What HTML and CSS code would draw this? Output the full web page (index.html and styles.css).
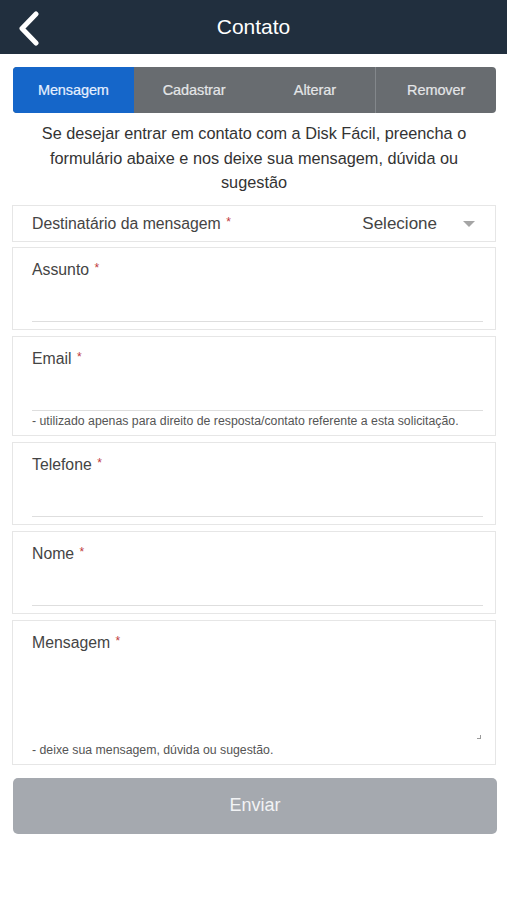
FILE: index.html
```html
<!DOCTYPE html>
<html lang="pt-BR">

<head>
    <meta charset="UTF-8">
    <meta name="viewport" content="width=device-width, initial-scale=1.0">
    <title>Contato</title>
    <link rel="stylesheet" href="styles.css">
</head>

<body>
    <header class="topbar">
        <a class="back" href="#">
            <svg width="22" height="36" viewBox="0 0 22 36">
                <polyline points="18,3 4,17.5 18,32" fill="none" stroke="#ffffff" stroke-width="5" stroke-linecap="round" stroke-linejoin="round" />
            </svg>
        </a>
        <h1>Contato</h1>
    </header>

    <div class="container">
        <nav class="tabs">
            <a class="tab active" href="#">Mensagem</a>
            <a class="tab" href="#">Cadastrar</a>
            <a class="tab" href="#">Alterar</a>
            <a class="tab split" href="#">Remover</a>
        </nav>

        <p class="intro">Se desejar entrar em contato com a Disk Fácil, preencha o formulário abaixe e nos deixe sua mensagem, dúvida ou sugestão</p>

        <div class="select-box">
            <span class="label">Destinatário da mensagem <span class="req">*</span></span>
            <span class="value">Selecione</span>
            <span class="caret"></span>
        </div>

        <div class="field">
            <label class="label">Assunto <span class="req">*</span></label>
            <div class="input"></div>
        </div>

        <div class="field">
            <label class="label">Email <span class="req">*</span></label>
            <div class="input"></div>
            <div class="help">- utilizado apenas para direito de resposta/contato referente a esta solicitação.</div>
        </div>

        <div class="field">
            <label class="label">Telefone <span class="req">*</span></label>
            <div class="input"></div>
        </div>

        <div class="field">
            <label class="label">Nome <span class="req">*</span></label>
            <div class="input"></div>
        </div>

        <div class="field">
            <label class="label">Mensagem <span class="req">*</span></label>
            <div class="textarea"><span class="grip"></span></div>
            <div class="help">- deixe sua mensagem, dúvida ou sugestão.</div>
        </div>

        <button class="send">Enviar</button>
    </div>
</body>

</html>
```

FILE: styles.css
```css
body {
    font-family: "Liberation Sans", Arial, sans-serif;
    background-color: #ffffff;
    color: #444444;
    margin: 0;
    padding: 0;
}

.topbar {
    height: 54px;
    background-color: #212f3e;
    display: flex;
    align-items: center;
    justify-content: center;
    position: relative;
}

.topbar h1 {
    margin: 0;
    font-size: 21px;
    font-weight: normal;
    color: #ffffff;
}

.back {
    position: absolute;
    left: 18px;
    top: 11px;
    display: block;
}

.container {
    padding: 13px 11px 0 12px;
}

.tabs {
    display: grid;
    grid-template-columns: repeat(4, 1fr);
    height: 46px;
    margin: 0 0 0 1px;
    border-radius: 4px;
    overflow: hidden;
    background-color: #686c70;
}

.tab {
    display: flex;
    align-items: center;
    justify-content: center;
    font-size: 14.5px;
    color: #e4e6e8;
    text-decoration: none;
    letter-spacing: -0.1px;
    -webkit-text-stroke: 0.2px currentColor;
}

.tab.active {
    background-color: #1566c9;
    color: #e6f0ff;
}

.tab.split {
    border-left: 1px solid #83878b;
}

.intro {
    margin: 8px 6px 10px;
    font-size: 16.3px;
    line-height: 24.5px;
    text-align: center;
    color: #333333;
}

.select-box {
    display: flex;
    align-items: center;
    height: 34px;
    border: 1px solid #e6e6e6;
    padding: 1px 20px 0 19px;
}

.select-box .label {
    flex: 1;
    font-size: 15.8px;
    color: #444444;
}

.select-box .value {
    font-size: 17px;
    color: #444444;
    margin-right: 26px;
}

.caret {
    width: 0;
    height: 0;
    border-left: 6px solid transparent;
    border-right: 6px solid transparent;
    border-top: 6px solid #a5a5a5;
}

.req {
    color: #c0393b;
    font-size: 12px;
    line-height: 0;
    vertical-align: 3px;
    margin-left: 1px;
}

.field {
    border: 1px solid #e6e6e6;
    padding: 13px 12px 7px 19px;
    margin-top: 5px;
}

.field + .field {
    margin-top: 6px;
}

.field .label {
    display: block;
    font-size: 15.8px;
    line-height: 18px;
    color: #444444;
}

.input {
    height: 42px;
    border-bottom: 1px solid #dedede;
}

.textarea {
    height: 88px;
    position: relative;
}

.grip {
    position: absolute;
    right: 2px;
    bottom: 1px;
    width: 3px;
    height: 3px;
    border-right: 1px solid #9a9a9a;
    border-bottom: 1px solid #9a9a9a;
}

.help {
    margin-top: 3px;
    font-size: 12.3px;
    line-height: 14px;
    color: #555555;
}

.send {
    display: block;
    width: 100%;
    height: 56px;
    margin: 13px 0 0 1px;
    border: none;
    border-radius: 5px;
    background-color: #a5a9af;
    color: #f2f3f5;
    font-family: "Liberation Sans", Arial, sans-serif;
    font-size: 18px;
}
```
